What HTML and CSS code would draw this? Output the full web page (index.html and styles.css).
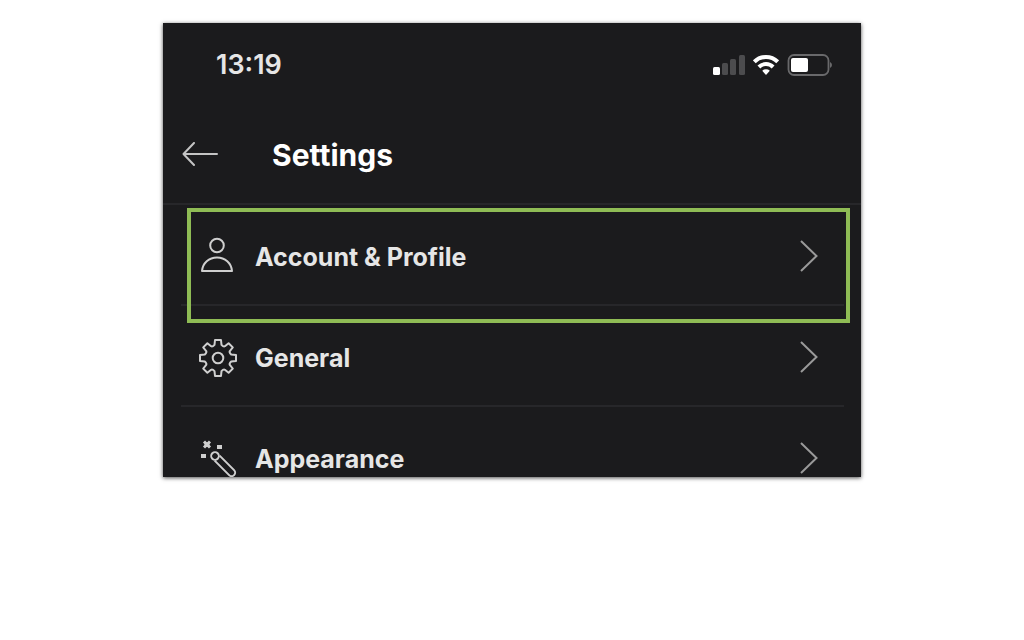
FILE: index.html
```html
<!DOCTYPE html>
<html lang="en">
<head>
  <meta charset="UTF-8" />
  <meta name="viewport" content="width=device-width, initial-scale=1.0" />
  <title>Settings</title>
  <link rel="stylesheet" href="styles.css">
</head>
<body>
  <main class="phone">
    <div class="status-bar">
      <time class="clock">13:19</time>
      <div class="status-icons">
        <svg width="32" height="22" viewBox="0 0 32 22" aria-hidden="true">
          <rect x="0" y="13" width="7" height="8" rx="1.5" fill="#fff" />
          <g fill="#4c4c4e">
            <rect x="9" y="9" width="6" height="12" rx="1.5" />
            <rect x="17" y="5" width="6" height="16" rx="1.5" />
            <rect x="26" y="1" width="6" height="20" rx="1.5" />
          </g>
        </svg>
        <svg width="26" height="22" viewBox="0 0 26 22" aria-hidden="true">
          <g fill="none" stroke="#fff" stroke-width="4">
            <path d="M1.300 7.800a16.600 16.600 0 0 1 23.400 0" />
            <path d="M5.900 13a10 10 0 0 1 14.200 0" />
          </g>
          <path d="M9.200 16.800a5.600 5.600 0 0 1 7.600 0L13 21z" fill="#fff" />
        </svg>
        <svg width="45" height="22" viewBox="0 0 45 22" aria-hidden="true">
          <rect x="1.500" y="1" width="40" height="20" rx="5.500" fill="none" stroke="#69696b" stroke-width="1.800" />
          <rect x="4" y="4" width="17" height="14" rx="2" fill="#fff" />
          <path d="M43 8q2 1 2 3t-2 3z" fill="#69696b" />
        </svg>
      </div>
    </div>

    <header class="title-bar">
      <button class="back" type="button" aria-label="Back">
        <svg width="36" height="26" viewBox="0 0 36 26">
          <path d="M35 12H1.500M12 1L1.500 12l10.500 11" />
        </svg>
      </button>
      <h1>Settings</h1>
    </header>

    <nav class="settings-list">
      <a class="row" href="#account">
        <svg class="icon" width="40" height="36" viewBox="0 2 40 36">
          <circle cx="19" cy="8.500" r="6.800" />
          <path d="M4 34C4.600 26 11 20.400 19 20.400S33.400 26 34 34z" />
        </svg>
        <span class="label">Account &amp; Profile</span>
        <svg class="chevron" width="18" height="32" viewBox="0 0 18 32"><path d="M1 0l15.500 15L1 30" /></svg>
      </a>
      <a class="row" href="#general">
        <svg class="icon" width="40" height="36" viewBox="-20 -18 40 36">
          <path d="M-3.500-13.200L-3-18H3L3.500-13.200Q5.500-11 6.900-11.800L10.600-14.800L14.800-10.600L11.800-6.900Q11-5.500 13.200-3.500L18-3V3L13.200 3.500Q11 5.500 11.800 6.900L14.800 10.600L10.600 14.800L6.900 11.800Q5.500 11 3.500 13.200L3 18H-3L-3.500 13.200Q-5.500 11-6.900 11.800L-10.600 14.800L-14.800 10.600L-11.800 6.900Q-11 5.500-13.200 3.500L-18 3V-3L-13.200-3.500Q-11-5.500-11.800-6.900L-14.800-10.600L-10.600-14.800L-6.900-11.800Q-5.500-11-3.500-13.200z" />
          <circle r="5.300" />
        </svg>
        <span class="label">General</span>
        <svg class="chevron" width="18" height="32" viewBox="0 0 18 32"><path d="M1 0l15.500 15L1 30" /></svg>
      </a>
      <a class="row" href="#appearance">
        <svg class="icon" width="40" height="36" viewBox="0 0 40 36">
          <g transform="translate(17 15) rotate(45)">
            <circle r="3.800" />
            <path d="M3-3.500H23.500a3.500 3.500 0 0 1 0 7H3" />
          </g>
          <path d="M6 0.500l6 6m0-6l-6 6" stroke-width="3" />
          <g class="spark">
            <rect x="6.500" y="1.500" width="5" height="4.500" />
            <rect x="19" y="4" width="5" height="4" />
            <rect x="3" y="13" width="5" height="4" />
          </g>
        </svg>
        <span class="label">Appearance</span>
        <svg class="chevron" width="18" height="32" viewBox="0 0 18 32"><path d="M1 0l15.500 15L1 30" /></svg>
      </a>
      <div class="highlight"></div>
    </nav>
  </main>
</body>
</html>
```
FILE: styles.css
```css
* {
  margin: 0;
  padding: 0;
  box-sizing: border-box;
}
body {
  background-color: #fff;
  color: #e6e6e6;
  font-family: Inter, "Liberation Sans", sans-serif;
}
.phone {
  max-width: 698px;
  margin: 23px auto;
  background-color: #1b1b1d;
  box-shadow: 0 1px 4px rgba(0, 0, 0, 0.7);
  overflow: hidden;
}
.status-bar {
  display: flex;
  justify-content: space-between;
  align-items: center;
  height: 83px;
  padding: 0 29px 0 53px;
}
.clock {
  font-size: 27px;
  font-weight: 600;
}
.status-icons {
  display: flex;
  align-items: center;
  gap: 8px;
}
.status-icons svg {
  display: block;
}
.title-bar {
  display: flex;
  align-items: center;
  gap: 54px;
  height: 99px;
  padding-left: 19px;
  border-bottom: 2px solid #27272a;
}
.title-bar h1 {
  font-size: 30px;
  font-weight: 700;
  color: #fff;
}
.back {
  background: none;
  border: none;
  cursor: pointer;
}
.back svg {
  display: block;
  fill: none;
  stroke: #c4c4c4;
  stroke-width: 2;
  stroke-linecap: round;
  stroke-linejoin: round;
}
.settings-list {
  position: relative;
  padding: 0 17px 0 18px;
}
.row {
  display: flex;
  align-items: center;
  gap: 17px;
  padding: 34px 26px 29px 17px;
  border-bottom: 2px solid #27272a;
  color: inherit;
  text-decoration: none;
}
.row:last-of-type {
  padding-bottom: 0;
  border-bottom: none;
}
.icon {
  flex: none;
  overflow: visible;
  fill: none;
  stroke: #cfcfcf;
  stroke-width: 2;
  stroke-linejoin: round;
}
.icon .spark {
  fill: #cfcfcf;
  stroke: none;
}
.label {
  flex: 1;
  font-size: 25px;
  line-height: 36px;
  font-weight: 700;
}
.chevron {
  flex: none;
  overflow: visible;
  fill: none;
  stroke: #9a9a9a;
  stroke-width: 2;
}
/* green frame around the first row */
.highlight {
  position: absolute;
  top: 3px;
  left: 24px;
  right: 11px;
  height: 115px;
  border: 4px solid #8fbc55;
  pointer-events: none;
}
```
